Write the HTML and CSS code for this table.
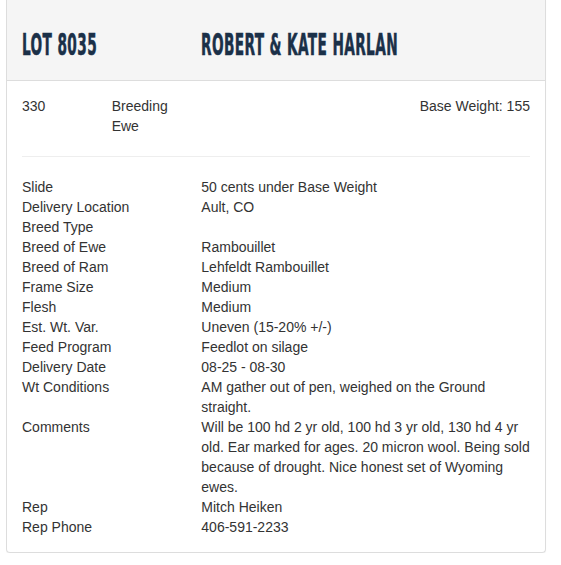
FILE: index.html
```html
<!DOCTYPE html>
<html>
<head>
<meta charset="utf-8">
<link rel="stylesheet" href="styles.css">
</head>
<body>
<div class="panel">
  <div class="panel-heading">
    <div class="row">
      <div class="col col-4"><h3 class="title"><span>LOT 8035</span></h3></div>
      <div class="col col-8"><h3 class="title"><span>ROBERT &amp; KATE HARLAN</span></h3></div>
    </div>
  </div>
  <div class="panel-body">
    <div class="row">
      <div class="col col-2">330</div>
      <div class="col col-2">Breeding Ewe</div>
      <div class="col col-8 right">Base Weight: 155</div>
    </div>
    <hr class="divider">
    <div class="row"><div class="col col-4">Slide</div><div class="col col-8">50 cents under Base Weight</div></div>
    <div class="row"><div class="col col-4">Delivery Location</div><div class="col col-8">Ault, CO</div></div>
    <div class="row"><div class="col col-4">Breed Type</div><div class="col col-8"></div></div>
    <div class="row"><div class="col col-4">Breed of Ewe</div><div class="col col-8">Rambouillet</div></div>
    <div class="row"><div class="col col-4">Breed of Ram</div><div class="col col-8">Lehfeldt Rambouillet</div></div>
    <div class="row"><div class="col col-4">Frame Size</div><div class="col col-8">Medium</div></div>
    <div class="row"><div class="col col-4">Flesh</div><div class="col col-8">Medium</div></div>
    <div class="row"><div class="col col-4">Est. Wt. Var.</div><div class="col col-8">Uneven (15-20% +/-)</div></div>
    <div class="row"><div class="col col-4">Feed Program</div><div class="col col-8">Feedlot on silage</div></div>
    <div class="row"><div class="col col-4">Delivery Date</div><div class="col col-8">08-25 - 08-30</div></div>
    <div class="row"><div class="col col-4">Wt Conditions</div><div class="col col-8">AM gather out of pen, weighed on the Ground straight.</div></div>
    <div class="row"><div class="col col-4">Comments</div><div class="col col-8">Will be 100 hd 2 yr old, 100 hd 3 yr old, 130 hd 4 yr old. Ear marked for ages. 20 micron wool. Being sold because of drought. Nice honest set of Wyoming ewes.</div></div>
    <div class="row"><div class="col col-4">Rep</div><div class="col col-8">Mitch Heiken</div></div>
    <div class="row"><div class="col col-4">Rep Phone</div><div class="col col-8">406-591-2233</div></div>
  </div>
</div>
</body>
</html>
```
FILE: styles.css
```css
* { box-sizing: border-box; }
html, body { background: #fff; }
body {
  margin: 0 0 0 6px;
  font-family: "Liberation Sans", Arial, sans-serif;
  font-size: 14px;
  line-height: 20px;
  color: #333;
}
.panel {
  width: 540px;
  border: 1px solid #ddd;
  border-top: none;
  border-radius: 0 0 4px 4px;
  box-shadow: 0 1px 1px rgba(0,0,0,0.05);
}
.panel-heading {
  background: #f5f5f5;
  border-bottom: 1px solid #ddd;
  padding: 24px 15px 16px;
}
.row {
  display: flex;
  margin: 0 -15px;
}
.col { padding: 0 15px; min-width: 0; }
.col-2 { width: 16.6667%; }
.col-4 { width: 33.3333%; }
.col-8 { width: 66.6667%; }
.right { text-align: right; }
.title {
  margin: 0;
  height: 40px;
  line-height: 40px;
  overflow: hidden;
  font-family: "DejaVu Sans Condensed", sans-serif;
  font-weight: bold;
  font-size: 31px;
  letter-spacing: 0.8px;
  color: #1b3048;
  white-space: nowrap;
}
.title span {
  display: inline-block;
  transform: scaleX(0.49);
  transform-origin: left center;
  -webkit-text-stroke: 0.6px #1b3048;
}
.panel-body { padding: 15px; }
.divider {
  margin: 20px 0;
  border: 0;
  border-top: 1px solid #eee;
}
```
